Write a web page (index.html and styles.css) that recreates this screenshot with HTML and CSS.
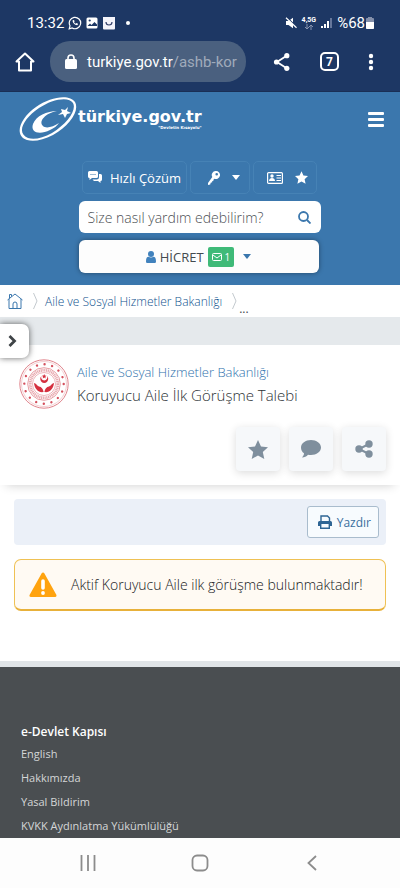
FILE: index.html
```html
<!DOCTYPE html>
<html lang="tr">
<head>
    <meta charset="UTF-8">
    <meta name="viewport" content="width=device-width, initial-scale=1.0">
    <title>Koruyucu Aile İlk Görüşme Talebi</title>
    <link rel="stylesheet" href="styles.css">
</head>
<body>
<div class="browser">
    <div class="status">
        <span class="status__time">13:32</span>
        <svg width="14" height="14" viewBox="0 0 14 14" fill="none" stroke="#fff">
            <path d="M1.2 12.8l.8-3A5.700 5.700 0 1 1 4.200 12z" stroke-width="1.200"/>
            <path d="M4.700 4.200c-.6 2.200 2.600 5.400 4.900 4.900l.4-1.300-1.500-.7-.8.7C6.800 7.400 6.300 6.800 6 6.100l.7-.7L6 4z" fill="#fff" stroke="none"/>
        </svg>
        <svg width="12" height="12" viewBox="0 0 12 12">
            <rect x="0.500" y="0.500" width="11" height="11" rx="1.500" fill="#fff"/>
            <path d="M1.500 9l2.500-2.500L5.500 8 8.500 5l2.500 2.500V9z" fill="#1d3764"/>
            <circle cx="3.700" cy="3.500" r="1.100" fill="#1d3764"/>
        </svg>
        <svg width="14" height="14" viewBox="0 0 14 14">
            <path d="M1 1h12v11.500a1 1 0 0 1-1 1H2a1 1 0 0 1-1-1z" fill="#f4f4fb"/>
            <path d="M4 6c0 4 6 4 6 0" fill="none" stroke="#39456e" stroke-width="1.200"/>
        </svg>
        <span class="status__dot"></span>
        <span class="status__right">
            <svg width="12" height="12" viewBox="0 0 12 12">
                <path d="M1 4h2.500L8 .8v10.400L3.500 8H1z" fill="#fff"/>
                <path d="M1.500 0l10.500 10" stroke="#1d3764" stroke-width="1.200"/>
                <path d="M1 .8l10.500 10" stroke="#fff" stroke-width="1.200"/>
            </svg>
            <span class="status__net">4,5G
                <svg width="10" height="6" viewBox="0 0 10 6" fill="none" stroke="#8794b0"><path d="M3 0v5M1 3l2 2 2-2M7 6V1M5 3l2-2 2 2"/></svg>
            </span>
            <svg width="11" height="12" viewBox="0 0 11 12">
                <path d="M0 9h2v2H0zM3 7h2v4H3zM6 4h2v7H6z" fill="#fff"/>
                <path d="M9 1h2v10H9z" fill="#66779b"/>
            </svg>
            <span class="status__battery">%68</span>
            <svg width="8" height="12" viewBox="0 0 8 12">
                <path d="M2 0h4v1h1a1 1 0 0 1 1 1v9a1 1 0 0 1-1 1H1a1 1 0 0 1-1-1V2a1 1 0 0 1 1-1h1z" fill="#8490ab"/>
                <path d="M0 5h8v6a1 1 0 0 1-1 1H1a1 1 0 0 1-1-1z" fill="#fff"/>
            </svg>
        </span>
    </div>

    <div class="toolbar">
        <button type="button" class="toolbar__button" aria-label="Ana ekran">
            <svg width="20" height="20" viewBox="0 0 20 20" fill="none" stroke="#fff" stroke-width="2"><path d="M10 1.500L1.500 9.500H4V18.500H16V9.500H18.500z" stroke-linejoin="round"/></svg>
        </button>
        <button type="button" class="address">
            <svg width="12" height="16" viewBox="0 0 12 16"><rect y="5" width="12" height="10" rx="1.500" fill="#fff"/><path d="M3 6V4a3 3 0 0 1 6 0v2" fill="none" stroke="#fff" stroke-width="1.600"/></svg>
            <span class="address__url">turkiye.gov.tr<span class="address__path">/ashb-kor</span></span>
        </button>
        <div class="toolbar__actions">
            <button type="button" class="toolbar__button" aria-label="Paylaş">
                <svg width="18" height="20" viewBox="0 0 18 20" fill="#fff"><path d="M14 3.500L4 10l10 6.500" fill="none" stroke="#fff" stroke-width="1.800"/><circle cx="13.800" cy="3.700" r="2.600"/><circle cx="3.500" cy="10" r="2.600"/><circle cx="13.800" cy="16.300" r="2.600"/></svg>
            </button>
            <button type="button" class="tabs" aria-label="Sekmeler">7</button>
            <button type="button" class="toolbar__button" aria-label="Menü">
                <svg width="6" height="18" viewBox="0 0 6 18" fill="#fff"><circle cx="3" cy="3" r="2.200"/><circle cx="3" cy="9" r="2.200"/><circle cx="3" cy="15" r="2.200"/></svg>
            </button>
        </div>
    </div>
</div>

<header class="header">
    <div class="header__top">
        <a href="#" class="logo">
            <svg width="58" height="46" viewBox="0 0 58 46">
                <path fill="#fff" fill-rule="evenodd" d="M8 44C-5 40 0 23 17 11 32 0 51-2 56 6c5 9-6 24-22 33-10 5-19 7-26 5zM9 42c6 2 15 0 24-5C48 28 58 14 54 7 50 0 33 3 20 12 4 23-3 37 9 42z"/>
                <path fill="#fff" d="M38 15C28 15 17 20 14 28c-3 9 7 11 17 6 4-2 7-4 9-7-6 4-13 6-16 3-5-5 3-13 14-15z"/>
                <path fill="#fff" d="M49 11l-1 4 4 2-4 1-2 4-2-4-5 1 4-3-1-3 4 1z"/>
            </svg>
            <span class="logo__text">
                <span class="logo__name">türkiye.gov.tr</span>
                <span class="logo__slogan">"Devletin Kısayolu"</span>
            </span>
        </a>
        <button type="button" class="menu" aria-label="Menü"><span></span><span></span><span></span></button>
    </div>

    <div class="header__tools">
        <div class="quick">
            <button type="button" class="quick__button quick__button_solution">
                <svg width="14" height="13" viewBox="0 0 14 13" fill="#fff"><path d="M1.500 0h7A1.500 1.500 0 0 1 10 1.500v4A1.500 1.500 0 0 1 8.500 7H4L1.500 9V7A1.500 1.500 0 0 1 0 5.500v-4A1.500 1.500 0 0 1 1.500 0z"/><path d="M11 3h1.500A1.500 1.500 0 0 1 14 4.500v4a1.500 1.500 0 0 1-1.500 1.500v2L10 10H6L4.500 8.500h4.200A2.300 2.300 0 0 0 11 6.200z"/><path d="M2.500 3.500h5" stroke="#3b77ad" stroke-dasharray="1 1"/></svg>
                Hızlı Çözüm
            </button>
            <button type="button" class="quick__button quick__button_login" aria-label="Giriş">
                <svg width="12" height="14" viewBox="0 0 12 14"><path fill="#fff" fill-rule="evenodd" d="M8 0a4 4 0 1 1-1.500 7.700L5.200 9l.3 1-1.500.3.200 1-1.500.4-.5 1.800L0 14v-2l4.300-6A4 4 0 0 1 8 0zm.7 2a1.300 1.300 0 1 0 0 2.600 1.300 1.300 0 0 0 0-2.600z"/></svg>
                <svg width="8" height="5" viewBox="0 0 8 5" fill="#fff"><path d="M0 0h8L4 5z"/></svg>
            </button>
            <button type="button" class="quick__button quick__button_card" aria-label="Favoriler">
                <svg width="16" height="12" viewBox="0 0 16 12"><rect x=".6" y=".6" width="14.800" height="10.800" rx="1" fill="none" stroke="#fff" stroke-width="1.200"/><circle cx="5" cy="4" r="1.700" fill="#fff"/><path d="M2 9c0-4 6-4 6 0z" fill="#fff"/><path d="M9.500 3.500H14M9.500 6H14M9.500 8.500H14" stroke="#fff"/></svg>
                <svg width="13" height="13" viewBox="0 0 20 19" fill="#fff"><path d="M10 0l3 6.500 7 .8-5.200 4.700 1.500 7L10 15.500 3.700 19l1.500-7L0 7.300l7-.8z"/></svg>
            </button>
        </div>

        <form class="search">
            <input type="text" class="search__input" aria-label="Arama" placeholder="Size nasıl yardım edebilirim?">
            <button type="submit" class="search__button" aria-label="Ara">
                <svg width="13" height="13" viewBox="0 0 13 13" fill="none" stroke="#3b77ad" stroke-width="1.800"><circle cx="5.500" cy="5.500" r="4.500"/><path d="M9 9l3.500 3.500"/></svg>
            </button>
        </form>

        <button type="button" class="user">
            <svg width="10" height="12" viewBox="0 0 10 12" fill="#4182bd"><circle cx="5" cy="3" r="3"/><path d="M0 10.500C0 7 1 6 2.500 5.800c1.500 1 3.500 1 5 0C9 6 10 7 10 10.500c0 1-.7 1.500-1.500 1.500h-7C.7 12 0 11.500 0 10.500z"/></svg>
            <span>HİCRET</span>
            <span class="user__badge">
                <svg width="10" height="8" viewBox="0 0 10 8" fill="none" stroke="#fff"><rect x=".5" y=".5" width="9" height="7" rx="1"/><path d="M1 2l4 3 4-3"/></svg>
                1
            </span>
            <svg class="user__caret" width="8" height="5" viewBox="0 0 8 5" fill="#3b77ad"><path d="M0 0h8L4 5z"/></svg>
        </button>
    </div>
</header>

<nav class="breadcrumb">
    <a href="#" aria-label="Ana Sayfa">
        <svg width="16" height="16" viewBox="0 0 16 16" fill="none" stroke="#3b77ad"><path d="M.5 7L8 1l7.500 6M2 6v9.500h12V6M6 15.500V11a2 2 0 0 1 4 0v4.500M2.500 5V1.500h2v2"/></svg>
    </a>
    <svg width="5" height="16" viewBox="0 0 5 16" fill="none" stroke="#c3c9ce"><path d="M.5 0l3.500 8-3.500 8"/></svg>
    <a href="#" class="breadcrumb__link">Aile ve Sosyal Hizmetler Bakanlığı</a>
    <svg width="5" height="16" viewBox="0 0 5 16" fill="none" stroke="#c3c9ce"><path d="M.5 0l3.500 8-3.500 8"/></svg>
    <span class="breadcrumb__more">...</span>
</nav>

<main class="main">
    <div class="band">
        <button type="button" class="side-toggle" aria-label="Yan menü">
            <svg width="9" height="12" viewBox="0 0 9 12" fill="none" stroke="#3f4447" stroke-width="2.800"><path d="M1.500 1l5 5-5 5"/></svg>
        </button>
    </div>

    <section class="service">
        <div class="service__head">
            <svg class="service__seal" width="50" height="50" viewBox="0 0 50 50" fill="none" stroke="#e0858d">
                <circle cx="25" cy="25" r="24.200"/>
                <circle cx="25" cy="25" r="22.500" stroke-width=".4"/>
                <circle cx="25" cy="25" r="19.700" stroke="#d4505d" stroke-width="2.400" stroke-linecap="round" stroke-dasharray="0.010 7.726"/>
                <circle cx="25" cy="25" r="16.300" stroke-width=".8"/>
                <circle cx="25" cy="25" r="13.800" stroke="#e8a9af" stroke-width="2.800" stroke-dasharray="1.200 .6"/>
                <circle cx="25" cy="25" r="11.500" stroke-width=".6"/>
                <g fill="#d5303f" stroke="none">
                    <path d="M22.500 17a4 4 0 1 0 5.500 0 3.100 3.100 0 1 1-5.500 0z"/>
                    <path d="M25.200 15l.7 1.600 1.700.1-1.300 1.100.4 1.700-1.500-.9-1.500.9.400-1.700-1.300-1.100 1.700-.1z"/>
                    <path d="M15 24c2 0 3 3 5 3.500 2.500.5 4 2 4.600 5.500-5 1-9-3-9.600-9z"/>
                    <path d="M35 24c-2 0-3 3-5 3.500-2.500.5-4 2-4.600 5.500 5 1 9-3 9.600-9z"/>
                </g>
            </svg>
            <h1 class="service__title">
                <a href="#" class="service__owner">Aile ve Sosyal Hizmetler Bakanlığı</a>
                Koruyucu Aile İlk Görüşme Talebi
            </h1>
        </div>
        <div class="service__actions">
            <button type="button" class="service__button" aria-label="Favorilere ekle">
                <svg width="20" height="19" viewBox="0 0 20 19" fill="#7f8f9d"><path d="M10 0l3 6.500 7 .8-5.200 4.700 1.500 7L10 15.500 3.700 19l1.500-7L0 7.300l7-.8z"/></svg>
            </button>
            <button type="button" class="service__button" aria-label="Yorum">
                <svg width="20" height="18" viewBox="0 0 20 18" fill="#7f8f9d"><path d="M10 0c5.500 0 10 3.300 10 7.500S15.500 15 10 15c-1 0-2-.1-3-.3C5.500 16.500 3.500 17.500 1 17.500c1.500-1.500 2-2.700 2-4.200C1 12 0 9.800 0 7.500 0 3.300 4.500 0 10 0z"/></svg>
            </button>
            <button type="button" class="service__button" aria-label="Paylaş">
                <svg width="18" height="18" viewBox="0 0 18 18" fill="#7f8f9d"><path d="M14 4L4 9l10 5" fill="none" stroke="#7f8f9d" stroke-width="2"/><circle cx="14" cy="4" r="3.700"/><circle cx="4" cy="9" r="3.700"/><circle cx="14" cy="14" r="3.700"/></svg>
            </button>
        </div>
    </section>

    <div class="content">
        <div class="print-bar">
            <button type="button" class="print">
                <svg width="14" height="14" viewBox="0 0 14 14"><path d="M3 7V1h6.500L11.500 3v4" fill="none" stroke="#2e6594" stroke-width="1.400"/><path d="M1.500 6h11A1.500 1.500 0 0 1 14 7.500V11h-2V9H2v2H0V7.500A1.500 1.500 0 0 1 1.500 6z" fill="#2e6594"/><path d="M2.700 9v4.200h8.600V9" fill="none" stroke="#2e6594" stroke-width="1.400"/></svg>
                Yazdır
            </button>
        </div>

        <div class="alert" role="alert">
            <svg width="28" height="26" viewBox="0 0 28 26"><path d="M14 2L2 23.500h24z" fill="#ffa30f" stroke="#ffa30f" stroke-width="3" stroke-linejoin="round"/><path d="M14 9v7" stroke="#fff" stroke-width="3.600" stroke-linecap="round"/><circle cx="14" cy="21" r="1.900" fill="#fff"/></svg>
            <p class="alert__text">Aktif Koruyucu Aile ilk görüşme bulunmaktadır!</p>
        </div>
    </div>
</main>

<footer class="footer">
    <h2 class="footer__title">e-Devlet Kapısı</h2>
    <ul class="footer__list">
        <li><a href="#">English</a></li>
        <li><a href="#">Hakkımızda</a></li>
        <li><a href="#">Yasal Bildirim</a></li>
        <li><a href="#">KVKK Aydınlatma Yükümlülüğü</a></li>
    </ul>
</footer>

<div class="system-nav">
    <button type="button" aria-label="Son uygulamalar">
        <svg width="16" height="16" viewBox="0 0 16 16" stroke="#8c8c8c" stroke-width="1.800"><path d="M1.500 0v16M8 0v16M14.500 0v16"/></svg>
    </button>
    <button type="button" aria-label="Ana ekran">
        <svg width="18" height="18" viewBox="0 0 18 18" fill="none" stroke="#8c8c8c" stroke-width="1.800"><rect x="1.500" y="1.500" width="15" height="15" rx="4.500"/></svg>
    </button>
    <button type="button" aria-label="Geri">
        <svg width="16" height="16" viewBox="0 0 16 16" fill="none" stroke="#8c8c8c" stroke-width="1.800"><path d="M12 1L4.500 8l7.500 7"/></svg>
    </button>
</div>
</body>
</html>
```
FILE: styles.css
```css
* { box-sizing: border-box; }
body {
    margin: 0;
    min-height: 100vh;
    display: flex;
    flex-direction: column;
    font-family: "Open Sans", sans-serif;
    color: #434a4f;
    background-color: #fff;
}
svg {
    display: block;
    flex-shrink: 0;
}
a { text-decoration: none; }
button {
    display: flex;
    align-items: center;
    justify-content: center;
    padding: 0;
    border: none;
    background: none;
    font-family: inherit;
    color: inherit;
    cursor: pointer;
}

/* Browser */
.browser {
    background-color: #1d3764;
    border-bottom: 1px solid #1a2f55;
    color: #fff;
    font-family: Roboto, sans-serif;
    padding: 13px 26px 9px 15px;
}
.status {
    display: flex;
    align-items: center;
    gap: 4px;
    height: 20px;
    padding-left: 12px;
    font-size: 15px;
    line-height: 20px;
}
.status__dot {
    width: 4px;
    height: 4px;
    margin-left: 6px;
    border-radius: 50%;
    background-color: #fff;
}
.status__right {
    display: flex;
    align-items: center;
    gap: 5px;
    margin-left: auto;
}
.status__battery {
    font-size: 15px;
    margin-right: -4px;
}
.status__net {
    display: flex;
    flex-direction: column;
    align-items: center;
    font-size: 7px;
    font-weight: bold;
    line-height: 7px;
}
.toolbar {
    display: flex;
    align-items: center;
    margin-top: 8px;
}
.address {
    flex: 1;
    min-width: 0;
    justify-content: flex-start;
    gap: 10px;
    height: 41px;
    margin-left: 15px;
    padding: 0 0 0 15px;
    border-radius: 20px;
    background-color: #4a607f;
    font-size: 15px;
}
.address__url { white-space: nowrap; }
.address__path { color: #a0abbb; }
.toolbar__actions {
    display: flex;
    align-items: center;
    gap: 29px;
    margin-left: 27px;
}
.tabs {
    width: 19px;
    height: 19px;
    border: 2px solid #fff;
    border-radius: 5px;
    font-size: 12px;
    font-weight: bold;
}

/* Header */
.header {
    background-color: #3b77ad;
    padding: 4px 16px 12px 15px;
}
.header__top {
    display: flex;
    justify-content: space-between;
    align-items: center;
    padding-left: 4px;
}
.logo {
    display: flex;
    align-items: center;
    gap: 1px;
    color: #fff;
}
.logo__text {
    display: flex;
    flex-direction: column;
    font-family: "DejaVu Sans", sans-serif;
    font-weight: bold;
}
.logo__name {
    font-size: 16px;
    line-height: 16px;
}
.logo__slogan {
    align-self: flex-end;
    font-size: 4px;
    line-height: 5px;
}
.menu {
    flex-direction: column;
    gap: 3px;
}
.menu span {
    width: 16px;
    height: 3px;
    border-radius: 1px;
    background-color: #fff;
}
.header__tools {
    display: flex;
    flex-direction: column;
    gap: 7px;
    max-width: 242px;
    margin: 19px auto 0;
}
.quick {
    display: flex;
    justify-content: center;
    gap: 3px;
}
.quick__button {
    height: 33px;
    border: 1px solid #4682b5;
    border-radius: 5px;
    color: #fff;
    font-size: 13px;
}
.quick__button_solution {
    gap: 8px;
    padding: 0 5px;
}
.quick__button_login {
    gap: 12px;
    padding: 0 9px 0 17px;
}
.quick__button_card {
    gap: 12px;
    padding: 0 8px 0 13px;
}
.search {
    display: flex;
    height: 32px;
    border-radius: 6px;
    background-color: #fff;
}
.search__input {
    flex: 1;
    min-width: 0;
    padding: 0 9px;
    border: none;
    outline: none;
    background: none;
    font-family: inherit;
    font-size: 14px;
    font-weight: 300;
}
.search__input::placeholder { color: #4c5054; }
.search__button { padding: 0 10px; }
.user {
    gap: 4px;
    height: 33px;
    margin-right: 2px;
    border-radius: 6px;
    background-color: #fdfdfd;
    box-shadow: 0 0 5px rgba(0, 0, 0, 0.4);
    font-size: 13px;
}
.user__badge {
    display: flex;
    align-items: center;
    gap: 3px;
    height: 20px;
    padding: 0 4px;
    border-radius: 2px;
    background-color: #3fba78;
    color: #fff;
    font-size: 10px;
}
.user__caret { margin-left: 5px; }

/* Breadcrumb */
.breadcrumb {
    display: flex;
    align-items: center;
    gap: 7px;
    height: 32px;
    padding: 0 7px;
    font-size: 12px;
}
.breadcrumb > svg { margin-left: 3px; }
.breadcrumb__link {
    color: #0f528e;
    font-weight: 300;
    white-space: nowrap;
}
.breadcrumb__more {
    align-self: flex-end;
    margin-left: -5px;
}

/* Content */
.main { border-bottom: 6px solid #e0e4e7; }
.band {
    position: relative;
    height: 28px;
    background-color: #e5e9ec;
}
.side-toggle {
    position: absolute;
    top: 7px;
    left: 0;
    width: 29px;
    height: 34px;
    padding-right: 4px;
    border-radius: 0 7px 7px 0;
    background-color: #fff;
    box-shadow: 0 0 6px rgba(0, 0, 0, 0.6);
}
.service {
    padding: 14px 14px;
    background-color: #fff;
    box-shadow: 0 6px 10px -6px rgba(0, 0, 0, 0.2);
}
.service__head {
    display: flex;
    align-items: center;
    gap: 8px;
    padding-left: 5px;
}
.service__title {
    margin: 0;
    color: #2b3135;
    font-size: 15px;
    font-weight: 300;
    line-height: 23px;
}
.service__owner {
    display: block;
    color: #2f72ad;
    font-size: 13px;
}
.service__actions {
    display: flex;
    justify-content: flex-end;
    gap: 9px;
    margin-top: 18px;
}
.service__button {
    width: 44px;
    height: 44px;
    border-radius: 4px;
    background-color: #f6f8fa;
    box-shadow: 0 2px 8px rgba(0, 0, 0, 0.14);
}
.content { padding: 14px 14px 50px; }
.print-bar {
    display: flex;
    justify-content: flex-end;
    padding: 7px;
    border-radius: 4px;
    background-color: #ebf0f8;
}
.print {
    gap: 5px;
    height: 32px;
    padding: 0 7px 0 10px;
    border: 1px solid #a9bccd;
    border-radius: 3px;
    background-color: #f7fbfe;
    color: #3b6f9f;
    font-size: 12px;
}
.alert {
    display: flex;
    align-items: center;
    gap: 14px;
    min-height: 52px;
    margin-top: 14px;
    padding: 0 14px;
    border: 1px solid #efc154;
    border-bottom: 2px solid #e8b13a;
    border-radius: 7px;
    background-color: #fffaf3;
}
.alert__text {
    margin: 0;
    color: #16191b;
    font-size: 14px;
    font-weight: 300;
}

/* Footer */
.footer {
    flex: 1;
    padding: 55px 21px 0;
    background-color: #4a4e51;
    color: #fff;
}
.footer__title {
    margin: 0;
    font-size: 12px;
    font-weight: 600;
    line-height: 20px;
}
.footer__list {
    margin: 0;
    padding: 0;
    list-style: none;
    font-size: 11px;
    line-height: 24px;
}
.footer__list a { color: #d4d6d7; }
.system-nav {
    display: flex;
    justify-content: center;
    gap: 95px;
    height: 50px;
    background-color: #fdfdfd;
}
```
